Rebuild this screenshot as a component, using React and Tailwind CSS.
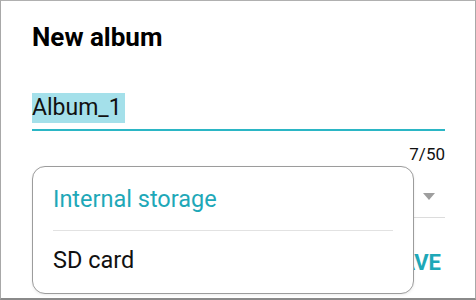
const TEAL = "text-[#1ea8b8]";

function StoragePopup() {
  return (
    <div className="absolute left-[31px] top-[165px] flex h-[128px] w-[382px] flex-col rounded-[13px] border border-[#9c9c9c] bg-white shadow-[0_1px_3px_rgba(0,0,0,0.08)]">
      <div className={`flex h-[63px] items-center px-[20px] pt-[2px] text-[23.5px] ${TEAL}`}>
        Internal storage
      </div>
      <div className="mx-[20px] h-px bg-[#e2e2e2]" />
      <div className="flex flex-1 items-center px-[20px] pb-[2px] text-[23.5px] text-[#111]">
        SD card
      </div>
    </div>
  );
}

export default function App() {
  return (
    <div
      className="relative h-[300px] w-[476px] overflow-hidden border-x border-t border-b-2 border-x-[#a8a8a8] border-t-[#b0b0b0] border-b-[#8a8a8a] bg-white"
      style={{ fontFamily: "Roboto, 'Noto Sans', sans-serif" }}
    >
      <div className="flex flex-col pl-[31px] pr-[30px]">
        <h1 className="mt-[19px] h-[34px] text-[26px] leading-[34px] font-bold text-black">
          New album
        </h1>

        <div className="mt-[39px] flex h-[36px] items-start">
          <span className="h-[30px] bg-[#a4e0ea] pr-[3px] text-[23px] leading-[30px] text-[#111]">
            Album_1
          </span>
        </div>
        <div className="h-[2px] bg-[#2bb6c5]" />

        <div className="mt-[13px] text-right text-[17px] leading-[20px] text-[#111]">7/50</div>

        <div className="mt-[16px] flex h-[37px] items-start justify-end pt-[13px] pr-[10px]">
          <svg width="12" height="7" viewBox="0 0 12 7">
            <path d="M0 0h12L6 7z" fill="#9e9e9e" />
          </svg>
        </div>
        <div className="ml-auto h-px w-[200px] bg-[#dcdcdc]" />

        <div className="mt-[33px] flex justify-end pr-[4px]">
          <span className={`text-[22px] leading-[24px] font-bold ${TEAL}`}>SAVE</span>
        </div>
      </div>

      <StoragePopup />
    </div>
  );
}
